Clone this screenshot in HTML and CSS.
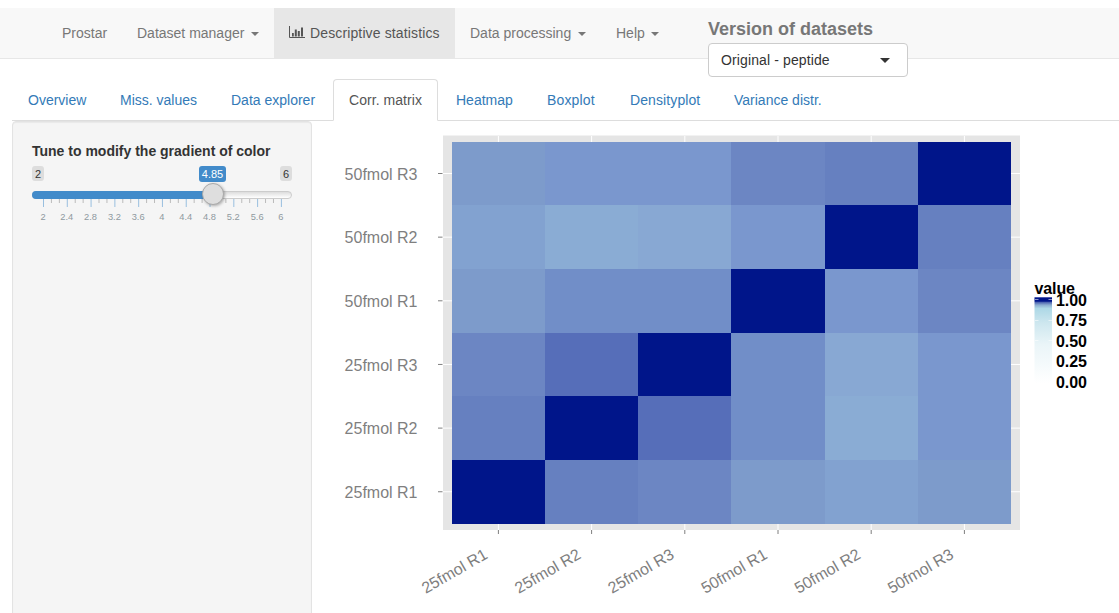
FILE: index.html
```html
<!DOCTYPE html>
<html lang="en">
<head>
<meta charset="utf-8">
<title>Prostar</title>
<link rel="stylesheet" href="styles.css">
</head>
<body>
<nav class="navbar">
  <a class="nav-item prostar">Prostar</a>
  <a class="nav-item manager">Dataset manager <i class="caret"></i></a>
  <a class="nav-item stats active"><svg class="chart-icon" width="16" height="13" viewBox="0 0 16 13"><path d="M.5 0v11.5H16" fill="none" stroke="currentColor"/><path d="M3 7h1.800v3.500H3zM5.800 3.500h2v7h-2zM8.800 5h2v5.500h-2zM12 1.500h2v9h-2z" fill="currentColor"/></svg><span class="stats-label">Descriptive statistics</span></a>
  <a class="nav-item processing">Data processing <i class="caret"></i></a>
  <a class="nav-item help">Help <i class="caret"></i></a>
  <div class="version">
    <div class="version-title">Version of datasets</div>
    <div class="select"><span class="select-text">Original - peptide</span><i class="select-arrow"></i></div>
  </div>
</nav>
<div class="tabs">
  <a class="tab overview">Overview</a>
  <a class="tab miss">Miss. values</a>
  <a class="tab explorer">Data explorer</a>
  <a class="tab corr selected">Corr. matrix</a>
  <a class="tab heatmap">Heatmap</a>
  <a class="tab boxplot">Boxplot</a>
  <a class="tab density">Densityplot</a>
  <a class="tab variance">Variance distr.</a>
</div>
<main class="content">
  <aside class="well">
    <div class="slider-label">Tune to modify the gradient of color</div>
    <div class="slider-values"><span class="limit">2</span><span class="current">4.85</span><span class="limit">6</span></div>
    <div class="track"><div class="fill"></div><div class="handle"></div></div>
    <svg class="ticks" id="ticks" width="260" height="26"></svg>
  </aside>
  <svg class="plot" id="plot" width="807" height="492" viewBox="312 121 807 492">
    <defs>
      <linearGradient id="scale" x1="0" y1="0" x2="0" y2="1">
        <stop offset="0" stop-color="#00158a"/><stop offset=".045" stop-color="#00158a"/>
        <stop offset=".06" stop-color="#5068b2"/><stop offset=".09" stop-color="#8cadd0"/>
        <stop offset=".13" stop-color="#add8e6"/><stop offset=".3" stop-color="#cee7ef"/>
        <stop offset=".55" stop-color="#eaf5f8"/><stop offset="1" stop-color="#fff"/>
      </linearGradient>
    </defs>
    <rect x="443" y="135.500" width="577" height="394.500" fill="#e5e5e5"/>
    <g id="matrix"></g>
    <rect x="1034.500" y="297.300" width="17.500" height="86" fill="url(#scale)"/>
    <path d="M1035 299.500h3.500M1048.500 299.500h3.500M1035 320.500h3.500M1048.500 320.500h3.500M1035 340.500h3.500M1048.500 340.500h3.500" stroke="#fff" stroke-opacity=".55"/>
    <g class="legend">
      <text x="1034.500" y="294" textLength="40.500">value</text>
      <text x="1056" y="306" textLength="31">1.00</text>
      <text x="1056" y="326" textLength="31">0.75</text>
      <text x="1056" y="347" textLength="31">0.50</text>
      <text x="1056" y="367" textLength="31">0.25</text>
      <text x="1056" y="388" textLength="31">0.00</text>
    </g>
  </svg>
</main>
<script src="plot.js"></script>
</body>
</html>
```
FILE: styles.css
```css
* { box-sizing: border-box; }
body { margin: 0; padding-top: 8px; height: 613px; overflow: hidden; background: #fff; color: #333; font: 14px/20px "Liberation Sans", Arial, sans-serif; }
.navbar { height: 51px; padding-left: 47px; display: flex; align-items: flex-start; background: #f8f8f8; border-bottom: 1px solid #e7e7e7; }
.nav-item { height: 50px; padding: 15px 0 15px 15px; color: #777; white-space: nowrap; }
.prostar { width: 75px; }
.manager { width: 152px; }
.stats { width: 181px; }
.stats-label { letter-spacing: .13px; }
.processing { width: 146px; }
.help { width: 107px; }
.nav-item.active { background: #e7e7e7; color: #555; }
.caret { display: inline-block; margin-left: 3px; vertical-align: middle; border: 4px solid transparent; border-top-color: #777; border-bottom: 0; }
.help .caret { margin-left: 2px; }
.chart-icon { margin-right: 5px; vertical-align: -1px; }
.version { width: 200px; padding-top: 9px; }
.version-title { height: 26px; line-height: 24px; font-size: 18px; font-weight: bold; color: #777; white-space: nowrap; }
.select { height: 34px; padding: 0 17px 0 12px; display: flex; align-items: center; justify-content: space-between; background: #fff; border: 1px solid #ccc; border-radius: 4px; color: #333; }
.select-text { letter-spacing: .12px; }
.select-arrow { border: 5px solid transparent; border-top-color: #333; border-bottom: 0; }
.tabs { height: 42px; margin: 20px 0 0 12px; display: flex; border-bottom: 1px solid #ddd; }
.tab { height: 42px; padding: 11px 0 0 16px; color: #337ab7; white-space: nowrap; }
.overview { width: 92px; }
.miss { width: 111px; }
.explorer { width: 118px; }
.corr { width: 105px; letter-spacing: .05px; }
.heatmap { width: 93px; padding-left: 18px; }
.boxplot { width: 83px; letter-spacing: .15px; }
.density { width: 104px; letter-spacing: .1px; }
.variance { width: 130px; }
.tab.selected { padding: 10px 0 0 15px; color: #555; background: #fff; border: 1px solid #ddd; border-bottom-color: #fff; border-radius: 4px 4px 0 0; }
.content { margin-left: 12px; display: flex; }
.well { width: 300px; height: 520px; padding: 19px; background: #f5f5f5; border: 1px solid #e3e3e3; border-radius: 4px; box-shadow: inset 0 1px 1px rgba(0,0,0,.05); }
.slider-label { font-weight: bold; white-space: nowrap; }
.slider-values { height: 22px; margin-top: 5px; display: flex; font-size: 11px; line-height: 16px; }
.limit { width: 12px; height: 15px; border-radius: 3px; background: #ddd; text-align: center; font-size: 11px; }
.current { width: 27px; height: 16px; margin: 0 54px 0 155px; border-radius: 3px; background: #428bca; color: #fff; text-align: center; }
.track { position: relative; width: 260px; height: 8px; margin-top: 3px; background: linear-gradient(#ddd, #fff); border: 1px solid #ccc; border-radius: 8px; }
.fill { width: 181px; height: 8px; margin: -1px; background: #428bca; border-radius: 8px 0 0 8px; }
.handle { position: absolute; left: 169px; top: -9px; width: 22px; height: 22px; border: 1px solid #aaa; border-radius: 50%; background: #dedede; box-shadow: 1px 1px 3px rgba(0,0,0,.3); }
.ticks { display: block; overflow: visible; }
.ticks text { font-size: 9.3px; fill: #8f999f; text-anchor: middle; }
.plot { display: block; width: 807px; height: 492px; font-family: "Liberation Sans", Arial, sans-serif; }
.axis { font-size: 16px; fill: #7f7f7f; text-anchor: end; }
.legend { font-size: 16px; font-weight: bold; fill: #000; }
```
FILE: plot.js
```js
const X = [452, 545, 638, 731, 825, 918, 1011];
const Y = [142, 205, 269, 333, 396, 460, 524];
const names = ['25fmol R1', '25fmol R2', '25fmol R3', '50fmol R1', '50fmol R2', '50fmol R3'];
const cells = [
  ['#7d9bcb', '#7a97ce', '#7a97ce', '#6c86c3', '#6680c0', '#00158a'],
  ['#82a2d0', '#8aacd4', '#88a8d3', '#7a97ce', '#00158a', '#6680c0'],
  ['#7d9bcb', '#718ec8', '#718ec8', '#00158a', '#7a97ce', '#6c86c3'],
  ['#6c86c3', '#566eb9', '#00158a', '#718ec8', '#88a8d3', '#7a97ce'],
  ['#6680c0', '#00158a', '#566eb9', '#718ec8', '#8aacd4', '#7a97ce'],
  ['#00158a', '#6680c0', '#6c86c3', '#7d9bcb', '#82a2d0', '#7d9bcb']
];
let out = '';
for (let i = 0; i < 6; i++) {
  const x = 498.4 + i * 93.2;
  const y = 173.5 + i * 63.65;
  out += `<path d="M${x} 136V530M443 ${y}H1020" stroke="#fff"/>`;
  out += `<path d="M${x} 530v4M438 ${y}h4.500" stroke="#7f7f7f"/>`;
  out += `<text class="axis" x="417.500" y="${y + 6.1}">${names[5 - i]}</text>`;
  out += `<text class="axis" transform="translate(${x - 9.6} 557.5) rotate(-30)">${names[i]}</text>`;
}
cells.forEach((row, r) => row.forEach((color, c) => {
  out += `<rect x="${X[c]}" y="${Y[r]}" width="${X[c + 1] - X[c]}" height="${Y[r + 1] - Y[r]}" fill="${color}"/>`;
}));
document.getElementById('matrix').innerHTML = out;

let ticks = '';
for (let i = 0; i <= 30; i++) {
  const major = i % 3 === 0;
  const x = 11.5 + i * 7.93;
  ticks += `<path d="M${x} 0v${major ? 8 : 4}" stroke="${major ? '#99bfdf' : '#bbb'}"/>`;
  if (major) ticks += `<text x="${x - 0.5}" y="21">${+(2 + i / 7.5).toFixed(1)}</text>`;
}
document.getElementById('ticks').innerHTML = ticks;
```
